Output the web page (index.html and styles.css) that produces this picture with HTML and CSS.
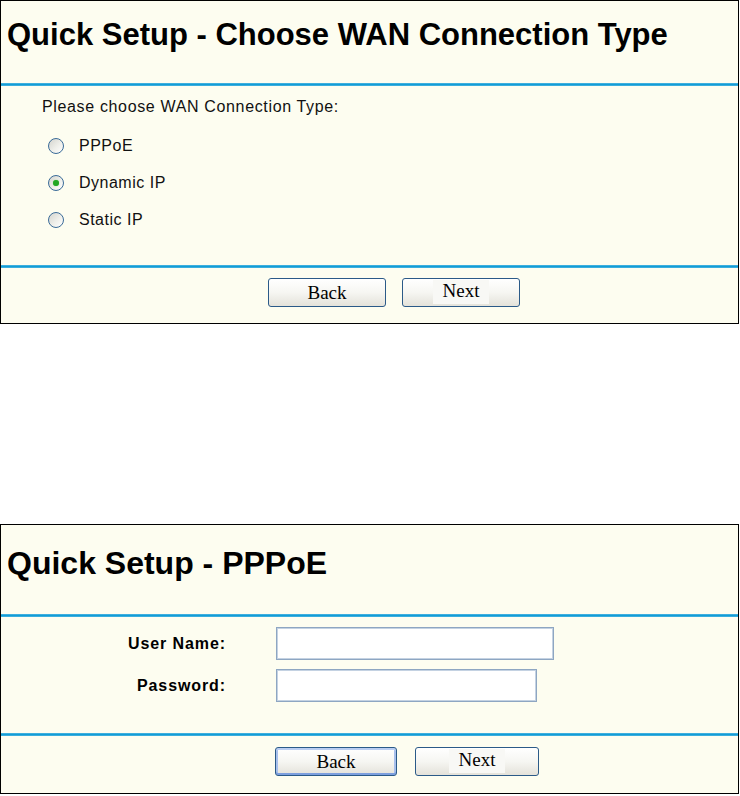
FILE: index.html
```html
<!DOCTYPE html>
<html lang="en">
<head>
    <meta charset="UTF-8">
    <title>Quick Setup</title>
    <link rel="stylesheet" href="styles.css">
</head>
<body>
    <div class="panel panel-wan">
        <div class="panel-head">
            <h1>Quick Setup - Choose WAN Connection Type</h1>
        </div>
        <div class="rule"></div>
        <div class="panel-body">
            <p class="prompt">Please choose WAN Connection Type:</p>
            <div class="options">
                <label class="option"><span class="radio"></span>PPPoE</label>
                <label class="option"><span class="radio checked"></span>Dynamic IP</label>
                <label class="option"><span class="radio"></span>Static IP</label>
            </div>
        </div>
        <div class="rule"></div>
        <div class="panel-foot">
            <button class="btn">Back</button>
            <button class="btn"><span class="cap">Next</span></button>
        </div>
    </div>

    <div class="panel panel-pppoe">
        <div class="panel-head">
            <h1>Quick Setup - PPPoE</h1>
        </div>
        <div class="rule"></div>
        <div class="panel-body">
            <div class="form-row">
                <label for="user">User Name:</label>
                <input type="text" id="user" class="field field-long">
            </div>
            <div class="form-row">
                <label for="pass">Password:</label>
                <input type="password" id="pass" class="field field-short">
            </div>
        </div>
        <div class="rule"></div>
        <div class="panel-foot">
            <button class="btn btn-default">Back</button>
            <button class="btn btn-wide"><span class="cap">Next</span></button>
        </div>
    </div>
</body>
</html>
```

FILE: styles.css
```css
* {
    margin: 0;
    padding: 0;
    box-sizing: border-box;
}

body {
    background: #ffffff;
    font-family: 'Liberation Sans', Arial, sans-serif;
    color: #000;
}

.panel {
    width: 739px;
    border: 1px solid #000;
    background: #fdfdf0;
}

.panel-pppoe {
    margin-top: 200px;
}

/* title */
.panel-head {
    height: 82px;
    padding: 16px 0 0 6px;
}

.panel-head h1 {
    font-size: 31px;
    line-height: 36px;
    font-weight: bold;
}

.panel-pppoe .panel-head {
    height: 89px;
    padding-top: 20px;
}

.panel-pppoe .panel-head h1 {
    font-size: 32px;
}

.rule {
    height: 3px;
    background: linear-gradient(#5cbbe4, #129dd6 40%, #129dd6 70%, #6cc2e6);
}

/* wan type */
.panel-wan .panel-body {
    padding: 10px 0 27px 41px;
}

.prompt {
    font-size: 16px;
    line-height: 22px;
    letter-spacing: 0.65px;
    color: #111;
}

.options {
    margin-top: 9px;
    padding-left: 6px;
}

.option {
    display: flex;
    align-items: center;
    gap: 15px;
    height: 37px;
    font-size: 16px;
    letter-spacing: 0.5px;
    color: #111;
}

.radio {
    width: 16px;
    height: 16px;
    border-radius: 50%;
    border: 1.5px solid #3a6b98;
    background: linear-gradient(135deg, #d4d4ce, #efefea 55%, #ffffff);
    display: flex;
    align-items: center;
    justify-content: center;
}

.radio.checked::after {
    content: "";
    width: 6px;
    height: 6px;
    border-radius: 50%;
    background: #22a622;
    box-shadow: 0 0 1px #5ccc5c;
}

/* pppoe form */
.panel-pppoe .panel-body {
    padding: 10px 0 31px;
    display: flex;
    flex-direction: column;
    gap: 9px;
}

.form-row {
    display: grid;
    grid-template-columns: 225px auto;
    column-gap: 50px;
    align-items: center;
}

.form-row label {
    text-align: right;
    font-size: 16px;
    font-weight: bold;
    letter-spacing: 0.9px;
}

.field {
    height: 33px;
    border: 1px solid #8ea6c2;
    box-shadow: inset 0 0 0 1px #c4d2e2;
    background: #fff;
    outline: none;
}

.field-long {
    width: 278px;
}

.field-short {
    width: 261px;
}

/* buttons */
.panel-foot {
    display: flex;
    gap: 16px;
    padding: 10px 0 16px 267px;
}

.panel-pppoe .panel-foot {
    gap: 18px;
    padding: 11px 0 17px 274px;
}

.btn {
    width: 118px;
    height: 29px;
    border: 1px solid #2b5a88;
    border-radius: 3px;
    background: linear-gradient(#ffffff, #f6f6f2 50%, #e4e2da);
    font-family: 'Liberation Serif', 'Times New Roman', serif;
    font-size: 19px;
    color: #000;
    display: flex;
    align-items: center;
    justify-content: center;
}

.panel-pppoe .btn {
    width: 122px;
}

.panel-pppoe .btn-wide {
    width: 124px;
}

.btn-default {
    box-shadow: inset 0 2px 0 #b9cdf2, inset 0 -2px 0 #7d9fde, inset 2px 0 0 #a8c0ec, inset -2px 0 0 #a8c0ec;
}

.cap {
    background: #f8f8f5;
    padding: 0 10px 2px;
    margin-top: -2px;
}
```
